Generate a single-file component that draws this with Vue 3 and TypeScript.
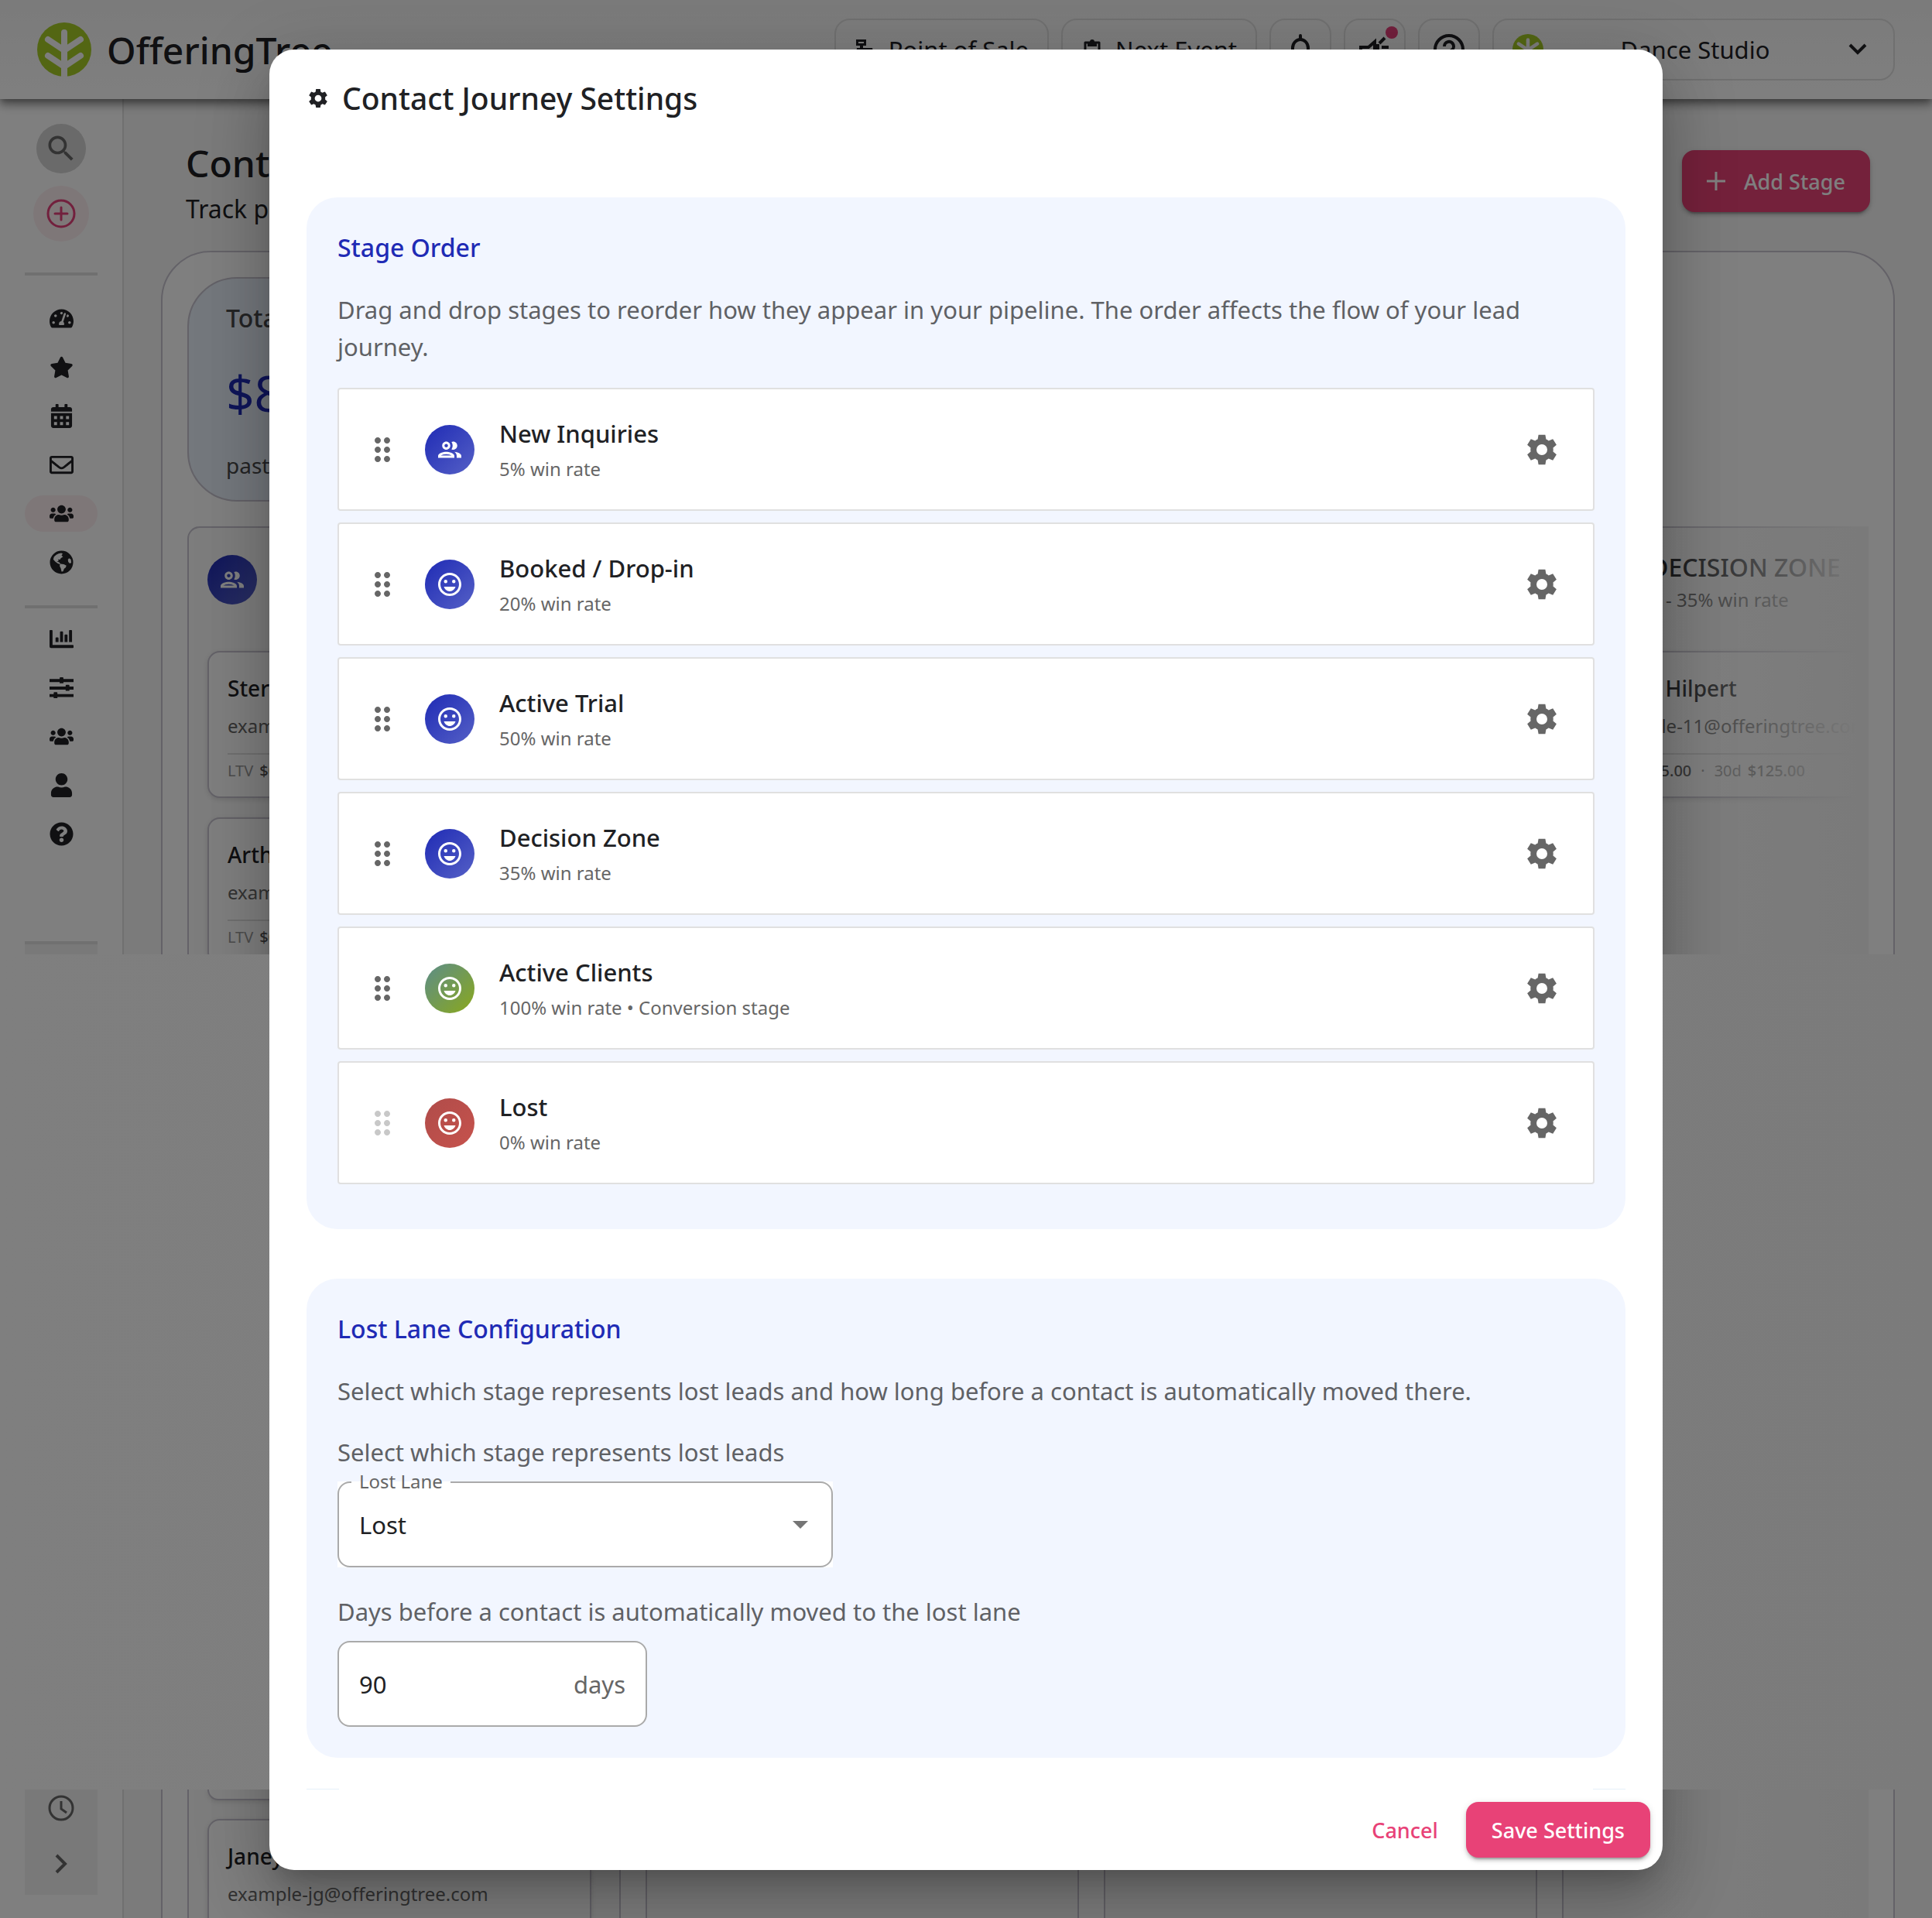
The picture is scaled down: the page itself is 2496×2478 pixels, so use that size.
<script setup lang="ts">
import { ref } from 'vue'

interface Stage {
  name: string
  detail: string
  tone: 'blue' | 'green' | 'red'
  icon: 'group' | 'smile'
  locked?: boolean
}

interface Glyph {
  box: string
  d: string
}

const stages: Stage[] = [
  { name: 'New Inquiries', detail: '5% win rate', tone: 'blue', icon: 'group' },
  { name: 'Booked / Drop-in', detail: '20% win rate', tone: 'blue', icon: 'smile' },
  { name: 'Active Trial', detail: '50% win rate', tone: 'blue', icon: 'smile' },
  { name: 'Decision Zone', detail: '35% win rate', tone: 'blue', icon: 'smile' },
  { name: 'Active Clients', detail: '100% win rate • Conversion stage', tone: 'green', icon: 'smile' },
  { name: 'Lost', detail: '0% win rate', tone: 'red', icon: 'smile', locked: true },
]

const lostLane = ref('Lost')
const lostDays = ref('90')

const material = {
  group:
    'M9 13.75c-2.34 0-7 1.17-7 3.5V19h14v-1.75c0-2.33-4.66-3.5-7-3.5zM4.34 17c.84-.58 2.87-1.25 4.66-1.25s3.82.67 4.66 1.25H4.34zM9 12c1.93 0 3.5-1.57 3.5-3.5S10.93 5 9 5 5.5 6.57 5.5 8.5 7.07 12 9 12zm0-5c.83 0 1.5.67 1.5 1.5S9.83 10 9 10s-1.5-.67-1.5-1.5S8.17 7 9 7zm7.04 6.81c1.16.84 1.96 1.96 1.96 3.44V19h4v-1.75c0-2.02-3.5-3.17-5.96-3.44zM15 12c1.93 0 3.5-1.57 3.5-3.5S16.93 5 15 5c-.54 0-1.04.13-1.5.35.63.89 1 1.98 1 3.15s-.37 2.26-1 3.15c.46.22.96.35 1.5.35z',
  smile:
    'M11.99 2C6.47 2 2 6.48 2 12s4.47 10 9.99 10C17.52 22 22 17.52 22 12S17.52 2 11.99 2zM12 20c-4.42 0-8-3.58-8-8s3.58-8 8-8 8 3.58 8 8-3.58 8-8 8zM14 9.5a1.5 1.5 0 1 0 3 0a1.5 1.5 0 1 0-3 0zM7 9.5a1.5 1.5 0 1 0 3 0a1.5 1.5 0 1 0-3 0zM12 18c2.28 0 4.22-1.66 5-4H7c.78 2.34 2.72 4 5 4z',
  gear: 'M14.2 2.4H9.8l-.5 2.9c-.6.25-1.15.57-1.65.95L4.9 5.15 2.55 8.9l2.2 1.85a7.6 7.6 0 0 0 0 2.5l-2.2 1.85 2.35 3.75 2.75-1.1c.5.38 1.05.7 1.65.95l.5 2.9h4.4l.5-2.9c.6-.25 1.15-.57 1.65-.95l2.75 1.1 2.35-3.75-2.2-1.85a7.6 7.6 0 0 0 0-2.5l2.2-1.85-2.35-3.75-2.75 1.1c-.5-.38-1.05-.7-1.65-.95zM12 8.5a3.5 3.5 0 1 1 0 7a3.5 3.5 0 0 1 0-7z',
  drag: 'M11 18c0 1.1-.9 2-2 2s-2-.9-2-2 .9-2 2-2 2 .9 2 2zm-2-8c-1.1 0-2 .9-2 2s.9 2 2 2 2-.9 2-2-.9-2-2-2zm0-6c-1.1 0-2 .9-2 2s.9 2 2 2 2-.9 2-2-.9-2-2-2zm6 4c1.1 0 2-.9 2-2s-.9-2-2-2-2 .9-2 2 .9 2 2 2zm0 2c-1.1 0-2 .9-2 2s.9 2 2 2 2-.9 2-2-.9-2-2-2zm0 6c-1.1 0-2 .9-2 2s.9 2 2 2 2-.9 2-2-.9-2-2-2z',
  search:
    'M15.5 14h-.79l-.28-.27C15.41 12.59 16 11.11 16 9.5 16 5.91 13.09 3 9.5 3S3 5.91 3 9.5 5.91 16 9.5 16c1.61 0 3.09-.59 4.23-1.57l.27.28v.79l5 4.99L20.49 19l-4.99-5zm-6 0C7.01 14 5 11.99 5 9.5S7.01 5 9.5 5 14 7.01 14 9.5 11.99 14 9.5 14z',
}

const users: Glyph = {
  box: '0 0 640 512',
  d: 'M96 224c35.3 0 64-28.7 64-64s-28.7-64-64-64-64 28.7-64 64 28.7 64 64 64zm448 0c35.3 0 64-28.7 64-64s-28.7-64-64-64-64 28.7-64 64 28.7 64 64 64zm32 32h-64c-17.6 0-33.5 7.1-45.1 18.6 40.3 22.1 68.9 62 75.1 109.4h66c17.7 0 32-14.3 32-32v-32c0-35.3-28.7-64-64-64zm-256 0c61.9 0 112-50.1 112-112S381.9 32 320 32 208 82.1 208 144s50.1 112 112 112zm76.8 32h-8.3c-20.8 10-43.9 16-68.5 16s-47.6-6-68.5-16h-8.3C179.6 288 128 339.6 128 403.2V432c0 26.5 21.5 48 48 48h288c26.5 0 48-21.5 48-48v-28.8c0-63.6-51.6-115.2-115.2-115.2zm-223.7-13.4C161.5 263.1 145.6 256 128 256H64c-35.3 0-64 28.7-64 64v32c0 17.7 14.3 32 32 32h65.9c6.3-47.4 34.9-87.3 75.2-109.4z',
}

const primaryNav: (Glyph & { label: string; active?: boolean })[] = [
  {
    label: 'Dashboard',
    box: '0 0 576 512',
    d: 'M288 32C128.94 32 0 160.94 0 320c0 52.8 14.25 102.26 39.06 144.8 5.61 9.62 16.3 15.2 27.44 15.2h443c11.14 0 21.83-5.58 27.44-15.2C561.75 422.26 576 372.8 576 320c0-159.06-128.94-288-288-288zm0 64c14.71 0 26.58 10.13 30.32 23.65-1.11 2.26-2.64 4.23-3.45 6.67l-9.22 27.67c-5.13 3.49-10.97 6.01-17.64 6.01-17.67 0-32-14.33-32-32S270.33 96 288 96zM96 384c-17.67 0-32-14.33-32-32s14.33-32 32-32 32 14.33 32 32-14.33 32-32 32zm48-160c-17.67 0-32-14.33-32-32s14.33-32 32-32 32 14.33 32 32-14.33 32-32 32zm246.77-72.41l-61.33 184C343.13 347.33 352 364.54 352 384c0 11.72-3.38 22.55-8.88 32H232.88c-5.5-9.45-8.88-20.28-8.88-32 0-33.94 26.5-61.43 59.9-63.59l61.34-184.01c4.17-12.56 17.73-19.45 30.36-15.17 12.57 4.19 19.35 17.79 15.17 30.36zm14.66 57.2l15.52-46.55c3.47-1.29 7.13-2.23 11.05-2.23 17.67 0 32 14.33 32 32s-14.33 32-32 32c-11.38-.01-20.89-6.28-26.57-15.22zM480 384c-17.67 0-32-14.33-32-32s14.33-32 32-32 32 14.33 32 32-14.33 32-32 32z',
  },
  {
    label: 'Favorites',
    box: '0 0 576 576',
    d: 'M316.9 50C311.6 39 300.4 32 288.1 32s-23.4 7-28.8 18L195 182.3 51.4 203.5c-12 1.8-22 10.2-25.7 21.7s-.7 24.2 7.9 32.7L137.8 361 113.2 506.7c-2 12 3 24.2 12.9 31.3s23 8 33.8 2.3l128.3-68.5 128.3 68.5c10.8 5.7 23.9 4.9 33.8-2.3s14.9-19.3 12.9-31.3L438.5 361 542.7 257.9c8.6-8.5 11.7-21.2 7.9-32.7s-13.7-19.9-25.7-21.7L381.2 182.3 316.9 50z',
  },
  {
    label: 'Calendar',
    box: '0 0 448 512',
    d: 'M0 464c0 26.5 21.5 48 48 48h352c26.5 0 48-21.5 48-48V192H0v272zM64 256h64v64H64zM192 256h64v64h-64zM320 256h64v64h-64zM64 384h64v64H64zM192 384h64v64h-64zM320 384h64v64h-64zM400 64h-48V16c0-8.8-7.2-16-16-16h-32c-8.8 0-16 7.2-16 16v48H160V16c0-8.8-7.2-16-16-16h-32c-8.8 0-16 7.2-16 16v48H48C21.5 64 0 85.5 0 112v48h448v-48c0-26.5-21.5-48-48-48z',
  },
  {
    label: 'Messages',
    box: '0 0 512 512',
    d: 'M464 64H48C21.49 64 0 85.49 0 112v288c0 26.51 21.49 48 48 48h416c26.51 0 48-21.49 48-48V112c0-26.51-21.49-48-48-48zm0 48v40.805c-22.422 18.259-58.168 46.651-134.587 106.49-16.841 13.247-50.201 45.072-73.413 44.701-23.208.375-56.579-31.459-73.413-44.701C106.18 199.465 70.425 171.067 48 152.805V112h416zM48 400V214.398c22.914 18.251 55.409 43.862 104.938 82.646 21.857 17.205 60.134 55.186 103.062 54.955 42.717.231 80.509-37.199 103.053-54.947 49.528-38.783 82.032-64.401 104.947-82.653V400H48z',
  },
  { label: 'Contacts', active: true, ...users },
  {
    label: 'Website',
    box: '0 0 32 32',
    d: 'M16 .5a15.5 15.5 0 1 0 0 31a15.5 15.5 0 0 0 0-31zM12 4.5L15.5 3.5 17.5 4.5 16 7 18 8.5 15 10.5 14 12.5 11.5 12 12 14.5 9.5 15 13 16 14.5 18 19 18.5 22.5 20.5 21.5 23 19.5 24.5 18 28 16 28.5 15 24 13.5 21 14 18.5 11 17.5 7.5 15 5 12 6 8.5 9 6zM26 10.5L28.5 12 29 16.5 27 17.5 25 15.5 24.5 12.5z',
  },
]

const secondaryNav: (Glyph & { label: string })[] = [
  {
    label: 'Reports',
    box: '0 0 32 32',
    d: 'M1 4h2a1 1 0 0 1 1 1v19h27a1 1 0 0 1 1 1v2a1 1 0 0 1-1 1H2a2 2 0 0 1-2-2V5a1 1 0 0 1 1-1zM9 14h2a1 1 0 0 1 1 1v5H8v-5a1 1 0 0 1 1-1zM15 6h2a1 1 0 0 1 1 1v13h-4V7a1 1 0 0 1 1-1zM21 10h2a1 1 0 0 1 1 1v9h-4v-9a1 1 0 0 1 1-1zM27 4h2a1 1 0 0 1 1 1v15h-4V5a1 1 0 0 1 1-1z',
  },
  {
    label: 'Filters',
    box: '0 0 32 32',
    d: 'M0 4.5h13.5V3a1 1 0 0 1 1-1h3a1 1 0 0 1 1 1v1.5H32v4H18.5V10h-5V8.500H0zM0 14.500h21.500V13a1 1 0 0 1 1-1h3a1 1 0 0 1 1 1v1.500H32v4h-5.500V20h-5v-1.500H0zM0 24.500h5.500V23a1 1 0 0 1 1-1h3a1 1 0 0 1 1 1v1.500H32v4H10.500V30h-5v-1.500H0z',
  },
  { label: 'Team', ...users },
  {
    label: 'Profile',
    box: '0 0 448 512',
    d: 'M224 256c70.7 0 128-57.3 128-128S294.7 0 224 0 96 57.3 96 128s57.3 128 128 128zm89.6 32h-16.7c-22.2 10.2-46.9 16-72.9 16s-50.6-5.8-72.9-16h-16.7C60.2 288 0 348.2 0 422.4V464c0 26.5 21.5 48 48 48h352c26.5 0 48-21.5 48-48v-41.6c0-74.2-60.2-134.4-134.4-134.4z',
  },
  {
    label: 'Help',
    box: '0 0 512 512',
    d: 'M504 256c0 136.997-111.043 248-248 248S8 392.997 8 256C8 119.083 119.043 8 256 8s248 111.083 248 248zM262.655 90c-54.497 0-89.255 22.957-116.549 63.758-3.536 5.286-2.353 12.415 2.715 16.258l34.699 26.31c5.205 3.947 12.621 3.008 16.665-2.122 17.864-22.658 30.113-35.797 57.303-35.797 20.429 0 45.698 13.148 45.698 32.958 0 14.976-12.363 22.667-32.534 33.976C247.128 238.528 216 254.941 216 296v4c0 6.627 5.373 12 12 12h56c6.627 0 12-5.373 12-12v-1.333c0-28.462 83.186-29.647 83.186-106.667 0-58.002-60.165-102-116.531-102zM256 338c-25.365 0-46 20.635-46 46 0 25.364 20.635 46 46 46s46-20.636 46-46c0-25.365-20.635-46-46-46z',
  },
]

interface Contact {
  name: string
  email: string
  ltv: string
  recent: string
}

interface Lane {
  title: string
  summary: string
  icon: 'group' | 'smile'
  contacts: Contact[]
}

const lanes: Lane[] = [
  {
    title: 'NEW INQUIRIES',
    summary: '3 - 5% win rate',
    icon: 'group',
    contacts: [
      { name: 'Sterling Rau', email: 'example-1@offeringtree.com', ltv: '$0.00', recent: '$0.00' },
      { name: 'Arthur Kuhn', email: 'example-2@offeringtree.com', ltv: '$0.00', recent: '$0.00' },
    ],
  },
  { title: 'BOOKED / DROP-IN', summary: '0 - 20% win rate', icon: 'smile', contacts: [] },
  { title: 'ACTIVE TRIAL', summary: '0 - 50% win rate', icon: 'smile', contacts: [] },
  {
    title: 'DECISION ZONE',
    summary: '1 - 35% win rate',
    icon: 'smile',
    contacts: [
      { name: 'Jamie Hilpert', email: 'example-11@offeringtree.com', ltv: '$125.00', recent: '$125.00' },
    ],
  },
]
</script>

<template>
  <div class="app">
    <div class="page">
      <div class="page-top">
        <header class="topbar">
          <a href="#" class="brand">
            <svg class="leaf" viewBox="0 0 70 70" aria-hidden="true">
              <circle cx="35" cy="35" r="35" fill="#a6cc27" />
              <path d="M35 13v57M35 36L14 22M35 36L56 22M35 57L14 43M35 57L56 43" stroke="#fafafa" stroke-width="8" stroke-linecap="round" fill="none" />
            </svg>
            <span>OfferingTree</span>
          </a>
          <nav class="tools">
            <button type="button" class="tool wide">
              <svg width="28" height="28" viewBox="0 0 28 28" aria-hidden="true">
                <path d="M2 1h13v8h-4v3h12l3 15H1l2-15h4V9H2zM5 4v2h7V4z" fill="#202124" fill-rule="evenodd" />
                <path d="M8 15v3M13 15v3M18 15v3" stroke="#fff" stroke-width="2" />
              </svg>
              Point of Sale
            </button>
            <button type="button" class="tool wide">
              <svg width="28" height="28" viewBox="0 0 28 28" aria-hidden="true">
                <path d="M5 5h18v21H5z" fill="none" stroke="#202124" stroke-width="3" stroke-linejoin="round" />
                <path d="M8 4h3a3 3 0 0 1 6 0h3v6H8z" fill="#202124" />
              </svg>
              Next Event
            </button>
            <button type="button" class="tool" aria-label="Notifications">
              <svg width="40" height="40" viewBox="0 0 40 40" aria-hidden="true">
                <path d="M20 2v5M10 29V18a10 11 0 0 1 20 0v11l3 3H7z" fill="none" stroke="#202124" stroke-width="4" stroke-linecap="round" />
              </svg>
            </button>
            <button type="button" class="tool" aria-label="Announcements">
              <svg width="44" height="40" viewBox="0 0 44 40" aria-hidden="true">
                <path d="M4 17h10l8-7v20l-8-6H4zM28 12l7-7M31 17h9M26 13v11" fill="none" stroke="#202124" stroke-width="4" />
              </svg>
              <span class="dot"></span>
            </button>
            <button type="button" class="tool" aria-label="Help">
              <svg width="40" height="40" viewBox="0 0 40 40" aria-hidden="true">
                <circle cx="20" cy="20" r="18" fill="none" stroke="#202124" stroke-width="4" />
                <path d="M14 16a6 6 0 1 1 9 5c-2 1-3 2-3 4M20 28v3" fill="none" stroke="#202124" stroke-width="4" />
              </svg>
            </button>
            <button type="button" class="tool account">
              <svg width="40" height="40" viewBox="0 0 70 70" aria-hidden="true">
                <circle cx="35" cy="35" r="35" fill="#a6cc27" />
                <path d="M35 13v57M35 36L14 22M35 36L56 22M35 57L14 43M35 57L56 43" stroke="#fafafa" stroke-width="8" stroke-linecap="round" fill="none" />
              </svg>
              <span>Dance Studio</span>
              <svg width="28" height="20" viewBox="0 0 28 20" aria-hidden="true">
                <path d="M4 4l10 10L24 4" fill="none" stroke="#202124" stroke-width="4" />
              </svg>
            </button>
          </nav>
        </header>

        <div class="shell">
          <aside class="sidebar">
            <button type="button" class="round search" aria-label="Search">
              <svg width="44" height="44" viewBox="0 0 24 24" aria-hidden="true"><path :d="material.search" fill="#666" /></svg>
            </button>
            <button type="button" class="round create" aria-label="Create">
              <svg width="38" height="38" viewBox="0 0 38 38" aria-hidden="true">
                <path d="M19 11v16M11 19h16" stroke="#e4407a" stroke-width="3" stroke-linecap="round" />
                <circle cx="19" cy="19" r="17" fill="none" stroke="#e4407a" stroke-width="3" />
              </svg>
            </button>
            <hr />
            <nav class="links">
              <a v-for="item in primaryNav" :key="item.label" href="#" :class="{ active: item.active }" :aria-label="item.label">
                <svg :viewBox="item.box" width="31" height="31" aria-hidden="true"><path :d="item.d" fill-rule="evenodd" /></svg>
              </a>
            </nav>
            <hr />
            <nav class="links second">
              <a v-for="item in secondaryNav" :key="item.label" href="#" :aria-label="item.label">
                <svg :viewBox="item.box" width="31" height="31" aria-hidden="true"><path :d="item.d" fill-rule="evenodd" /></svg>
              </a>
            </nav>
            <div class="rail-foot"></div>
          </aside>

          <main class="main">
            <div class="heading">
              <div>
                <h1>Contact Journey</h1>
                <p>Track potential clients</p>
              </div>
              <button type="button" class="primary add">
                <svg width="24" height="24" viewBox="0 0 24 24" aria-hidden="true"><path d="M12 0v24M0 12h24" stroke="#fff" stroke-width="3" /></svg>
                Add Stage
              </button>
            </div>
            <section class="board">
              <div class="kpi">
                <span class="kpi-title">Total Value</span>
                <strong>$8,250</strong>
                <span class="kpi-note">past 30 days</span>
              </div>
              <div class="lanes">
                <div v-for="lane in lanes" :key="lane.title" class="lane">
                  <div class="lane-head">
                    <span class="badge blue">
                      <svg width="36" height="36" viewBox="0 0 24 24" aria-hidden="true"><path :d="material[lane.icon]" fill="#fff" /></svg>
                    </span>
                    <div>
                      <h2>{{ lane.title }}</h2>
                      <p>{{ lane.summary }}</p>
                    </div>
                  </div>
                  <article v-for="c in lane.contacts" :key="c.email" class="contact">
                    <h3>{{ c.name }}</h3>
                    <p>{{ c.email }}</p>
                    <footer><span>LTV</span><b>{{ c.ltv }}</b><i>·</i><span>30d</span><b class="soft">{{ c.recent }}</b></footer>
                  </article>
                </div>
              </div>
            </section>
          </main>
        </div>
      </div>

      <div class="page-gap"></div>

      <div class="page-bottom">
        <aside class="sidebar low">
          <div class="rail-end">
            <svg width="36" height="36" viewBox="0 0 36 36" aria-hidden="true">
              <circle cx="18" cy="18" r="15" fill="none" stroke="#666" stroke-width="3" />
              <path d="M18 9v10l7 5" fill="none" stroke="#666" stroke-width="3" />
            </svg>
            <svg width="20" height="28" viewBox="0 0 20 28" aria-hidden="true"><path d="M4 3l11 11L4 25" fill="none" stroke="#666" stroke-width="4" /></svg>
          </div>
        </aside>
        <div class="main low">
          <div class="board low">
            <div class="lanes">
              <div class="lane">
                <div class="contact tail"></div>
                <article class="contact">
                  <h3>Janey Grant</h3>
                  <p>example-jg@offeringtree.com</p>
                </article>
              </div>
              <div class="lane"></div>
              <div class="lane"></div>
              <div class="lane"></div>
            </div>
          </div>
        </div>
      </div>
    </div>

    <div class="scrim"><div class="halo"></div></div>
    <div class="veil"></div>

    <form class="dialog" role="dialog" aria-labelledby="dialog-title" @submit.prevent>
      <header class="dialog-head">
        <svg width="30" height="30" viewBox="0 0 24 24" aria-hidden="true"><path :d="material.gear" fill="#202124" fill-rule="evenodd" /></svg>
        <h2 id="dialog-title">Contact Journey Settings</h2>
      </header>

      <div class="dialog-body">
        <section class="panel order">
          <h3>Stage Order</h3>
          <p>Drag and drop stages to reorder how they appear in your pipeline. The order affects the flow of your lead journey.</p>
          <ul>
            <li v-for="stage in stages" :key="stage.name">
              <svg class="drag" :class="{ locked: stage.locked }" width="48" height="48" viewBox="0 0 24 24" aria-hidden="true"><path :d="material.drag" /></svg>
              <span class="badge" :class="stage.tone">
                <svg width="36" height="36" viewBox="0 0 24 24" aria-hidden="true"><path :d="material[stage.icon]" fill="#fff" /></svg>
              </span>
              <div class="stage-text">
                <h4>{{ stage.name }}</h4>
                <span>{{ stage.detail }}</span>
              </div>
              <button type="button" class="cog" :aria-label="`Configure ${stage.name}`">
                <svg width="48" height="48" viewBox="0 0 24 24" aria-hidden="true"><path :d="material.gear" fill="#666" fill-rule="evenodd" /></svg>
              </button>
            </li>
          </ul>
        </section>

        <section class="panel">
          <h3>Lost Lane Configuration</h3>
          <p>Select which stage represents lost leads and how long before a contact is automatically moved there.</p>
          <p>Select which stage represents lost leads</p>
          <div class="select-box">
            <label for="lost-lane">Lost Lane</label>
            <select id="lost-lane" v-model="lostLane">
              <option v-for="stage in stages" :key="stage.name">{{ stage.name }}</option>
            </select>
            <svg width="48" height="48" viewBox="0 0 24 24" aria-hidden="true"><path d="M7 10l5 5 5-5z" fill="#757575" /></svg>
          </div>
          <label class="days-label" for="lost-days">Days before a contact is automatically moved to the lost lane</label>
          <div class="days-box">
            <input id="lost-days" v-model="lostDays" type="text" inputmode="numeric" />
            <span>days</span>
          </div>
        </section>
        <div class="next-edge"><span></span><span></span></div>
      </div>

      <footer class="dialog-foot">
        <button type="button" class="cancel">Cancel</button>
        <button type="submit" class="primary save">Save Settings</button>
      </footer>
    </form>
  </div>
</template>

<style>
body {
  margin: 0;
}
</style>

<style scoped>
.app,
.app * {
  box-sizing: border-box;
}
.app {
  position: relative;
  overflow: hidden;
  padding: 64px 0;
  font-family: 'Noto Sans', 'Open Sans', sans-serif;
  font-size: 31px;
  color: #202124;
}
h1,
h2,
h3,
h4,
p,
ul {
  margin: 0;
  padding: 0;
  font-size: inherit;
  font-weight: 400;
}
button,
input,
select {
  font: inherit;
  color: inherit;
  border: 0;
  background: none;
  padding: 0;
}
svg {
  display: block;
  flex: none;
}
a {
  color: inherit;
  text-decoration: none;
}

/* page behind the dialog */
.page,
.scrim,
.veil {
  position: absolute;
  inset: 0;
}
.page {
  isolation: isolate;
  display: flex;
  flex-direction: column;
  background: #f7f7f7;
}
.page-top {
  height: 1233px;
  overflow: hidden;
  display: flex;
  flex-direction: column;
}
.page-gap {
  flex: 1;
}
.page-bottom {
  height: 168px;
  overflow: hidden;
  display: flex;
}
.scrim {
  background: rgba(0, 0, 0, 0.5);
}
.halo {
  width: 1800px;
  max-width: calc(100% - 128px);
  height: calc(100% - 128px);
  margin: 64px auto;
  border-radius: 32px;
  box-shadow: 0 22px 30px -14px rgba(0, 0, 0, 0.2), 0 48px 76px 6px rgba(0, 0, 0, 0.14), 0 18px 92px 16px rgba(0, 0, 0, 0.12);
}
.veil {
  top: 1233px;
  bottom: 168px;
  background: linear-gradient(90deg, #7f7f7f, #7b7b7b);
}

.topbar {
  position: relative;
  z-index: 1;
  flex: none;
  height: 128px;
  padding: 0 48px;
  display: flex;
  align-items: center;
  justify-content: space-between;
  background: linear-gradient(#f6f6f6, #ffffff);
  box-shadow: 0 4px 8px -2px rgba(0, 0, 0, 0.3), 0 8px 10px rgba(0, 0, 0, 0.24), 0 2px 20px rgba(0, 0, 0, 0.22);
}
.brand {
  display: flex;
  align-items: center;
  gap: 20px;
  font-size: 48px;
  font-weight: 500;
}
.leaf {
  width: 70px;
  height: 70px;
}
.tools {
  display: flex;
  gap: 16px;
}
.tool {
  position: relative;
  width: 80px;
  height: 80px;
  border: 2px solid #e0e0e0;
  border-radius: 20px;
  display: flex;
  align-items: center;
  justify-content: center;
}
.tool.wide {
  width: auto;
  padding: 0 24px;
  gap: 16px;
}
.tool.account {
  width: 520px;
  padding: 0 32px 0 24px;
  justify-content: space-between;
}
.dot {
  position: absolute;
  top: 8px;
  right: 8px;
  width: 16px;
  height: 16px;
  border-radius: 50%;
  background: #e4407a;
}

.shell {
  flex: 1;
  display: flex;
}
.sidebar {
  flex: none;
  width: 160px;
  padding: 32px 0 0;
  border-right: 2px solid #e0e0e0;
  background: #ffffff;
  display: flex;
  flex-direction: column;
  align-items: center;
}
.sidebar hr {
  flex: none;
  width: 94px;
  height: 4px;
  border: 0;
  margin: 0;
  background: #e0e0e0;
}
.round {
  flex: none;
  border-radius: 50%;
  display: flex;
  align-items: center;
  justify-content: center;
}
.search {
  width: 64px;
  height: 64px;
  background: #d4d4d4;
}
.create {
  width: 72px;
  height: 72px;
  margin: 16px 0 40px;
  background: #fdeef1;
}
.links {
  display: flex;
  flex-direction: column;
  gap: 16px;
  padding: 32px 0;
}
.links.second {
  padding: 16px 0 115px;
}
.links a {
  width: 94px;
  height: 47px;
  border-radius: 24px;
  display: flex;
  align-items: center;
  justify-content: center;
}
.links a.active {
  background: #fdeef1;
}
.links svg {
  fill: #202124;
}
.rail-foot {
  width: 94px;
  flex: 1;
  border-top: 4px solid #e0e0e0;
  background: #f2f2f2;
}
.main {
  flex: 1;
  min-width: 0;
  padding: 48px 48px 0;
}
.heading {
  display: flex;
  align-items: flex-start;
  justify-content: space-between;
  padding: 0 32px;
  height: 148px;
}
.heading h1 {
  font-size: 48px;
  line-height: 70px;
  font-weight: 500;
}
.heading p {
  font-size: 32px;
  line-height: 48px;
}
.primary {
  display: flex;
  align-items: center;
  justify-content: center;
  border-radius: 16px;
  background: #e84277;
  color: #ffffff;
  font-size: 27px;
  font-weight: 500;
  box-shadow: 0 6px 2px -4px rgba(0, 0, 0, 0.2), 0 4px 4px rgba(0, 0, 0, 0.14), 0 2px 10px rgba(0, 0, 0, 0.12);
}
.add {
  height: 80px;
  margin-top: 18px;
  padding: 0 32px;
  gap: 24px;
}
.board {
  border: 2px solid #c8c5d0;
  border-radius: 64px;
  padding: 32px;
  height: 2200px;
  background: #ffffff;
}
.kpi {
  width: 560px;
  height: 290px;
  border: 2px solid #c8c5d0;
  border-radius: 64px;
  padding: 23px 48px;
  display: flex;
  flex-direction: column;
  background: #e8f1fb;
  color: #49494b;
}
.kpi-title {
  font-size: 32px;
  line-height: 56px;
  font-weight: 500;
}
.kpi strong {
  font-size: 64px;
  line-height: 138px;
  font-weight: 400;
  color: #1f2bb5;
}
.kpi-note {
  font-size: 28px;
  line-height: 48px;
}
.lanes {
  position: relative;
  margin-top: 32px;
  display: flex;
  gap: 32px;
  overflow: hidden;
}
.lanes::after {
  content: '';
  position: absolute;
  top: 0;
  right: 0;
  bottom: 0;
  width: 280px;
  background: linear-gradient(90deg, rgba(245, 245, 245, 0), #f5f5f5 95%);
}
.lane {
  flex: none;
  width: 560px;
  height: 1600px;
  border: 2px solid #c8c5d0;
  border-radius: 16px;
  padding: 0 24px;
  background: #fafafa;
}
.lane-head {
  height: 159px;
  padding-top: 27px;
  display: flex;
  gap: 24px;
}
.lane-head h2 {
  font-size: 32px;
  line-height: 48px;
  font-weight: 500;
}
.lane-head .badge {
  margin-top: 8px;
}
.lane-head p {
  font-size: 24px;
  line-height: 36px;
  color: #666;
}
.contact {
  width: 496px;
  height: 190px;
  margin-bottom: 25px;
  border: 2px solid #c8c5d0;
  border-radius: 16px;
  padding: 24px 24px 0;
  background: #ffffff;
  box-shadow: 0 2px 6px rgba(0, 0, 0, 0.12);
}
.contact h3 {
  font-size: 28px;
  line-height: 44px;
  font-weight: 500;
}
.contact p {
  margin-top: 8px;
  font-size: 24px;
  line-height: 38px;
  color: #666;
}
.contact footer {
  display: flex;
  gap: 8px;
  margin-top: 16px;
  padding-top: 5px;
  border-top: 2px solid #e0e0e0;
  font-size: 20px;
  line-height: 32px;
  color: #999;
}
.contact b {
  font-weight: 500;
  color: #555;
}
.contact b.soft {
  color: #777;
}
.contact i {
  font-style: normal;
  padding: 0 4px;
}

/* lower slice of the same page */
.sidebar.low {
  padding: 0;
}
.rail-end {
  width: 94px;
  height: 136px;
  padding: 6px 0 26px;
  background: #f2f2f2;
  display: flex;
  flex-direction: column;
  align-items: center;
  justify-content: space-between;
}
.main.low {
  padding-top: 0;
}
.board.low {
  border-width: 0 2px;
  border-radius: 0;
  padding-top: 0;
}
.board.low .lanes {
  margin-top: 0;
}
.board.low .lane {
  border-width: 0 2px;
  border-radius: 0;
}
.contact.tail {
  height: 14px;
  padding: 0;
  margin-bottom: 24px;
  border-top: 0;
  border-radius: 0 0 16px 16px;
}

/* dialog */
.dialog {
  position: relative;
  width: 1800px;
  max-width: calc(100% - 128px);
  margin: 0 auto;
  border-radius: 32px;
  background: #ffffff;
}
.dialog-head {
  display: flex;
  align-items: center;
  gap: 16px;
  padding: 32px 48px;
}
.dialog-head h2 {
  font-size: 39px;
  line-height: 62px;
  font-weight: 500;
}
.dialog-body {
  padding: 65px 48px 0;
}
.panel {
  border-radius: 40px;
  padding: 40px;
  background: #f2f6ff;
}
.panel.order {
  margin-bottom: 64px;
  padding-bottom: 58px;
}
.panel h3 {
  font-size: 32px;
  line-height: 50px;
  font-weight: 500;
  color: #1f2bb5;
}
.panel p {
  margin-top: 31px;
  line-height: 48px;
  color: #5f6165;
}
.panel ul {
  margin-top: 29px;
  list-style: none;
  display: flex;
  flex-direction: column;
  gap: 15px;
}
.panel li {
  height: 159px;
  padding: 0 32px;
  border: 2px solid #e0e0e0;
  border-radius: 4px;
  background: #ffffff;
  display: flex;
  align-items: center;
}
.drag {
  margin-right: 31px;
  fill: #666;
}
.drag.locked {
  fill: #c8c8c8;
}
.badge {
  flex: none;
  width: 64px;
  height: 64px;
  border-radius: 50%;
  display: flex;
  align-items: center;
  justify-content: center;
}
.badge.blue {
  background: linear-gradient(135deg, #1f2bb5, #5560c6);
}
.badge.green {
  background: linear-gradient(135deg, #5c8d89, #8aa81c);
}
.badge.red {
  background: linear-gradient(135deg, #b04c4a, #c6524c);
}
.stage-text {
  flex: 1;
  margin-left: 32px;
}
.stage-text h4 {
  line-height: 50px;
  font-weight: 500;
}
.stage-text span {
  display: block;
  font-size: 24px;
  line-height: 42px;
  color: #666;
}
.cog {
  padding: 10px;
}
.days-label {
  display: block;
  line-height: 48px;
  color: #5f6165;
}
.select-box {
  position: relative;
  width: 640px;
  max-width: 100%;
  height: 111px;
  margin: 14px 0 33px;
  background: #ffffff;
}
.select-box label {
  position: absolute;
  left: 18px;
  top: -15px;
  padding: 0 10px;
  font-size: 24px;
  line-height: 30px;
  color: #666;
  background: linear-gradient(transparent 50%, #ffffff 50%);
}
.select-box select {
  width: 100%;
  height: 100%;
  padding: 0 26px;
  border: 2px solid #aaaaaa;
  border-radius: 16px;
  appearance: none;
}
.select-box svg {
  position: absolute;
  right: 18px;
  top: 31px;
  pointer-events: none;
}
.days-box {
  width: 400px;
  height: 111px;
  margin-top: 14px;
  padding: 0 26px;
  border: 2px solid #aaaaaa;
  border-radius: 16px;
  background: #ffffff;
  display: flex;
  align-items: center;
  color: #666;
}
.days-box input {
  flex: 1;
  min-width: 0;
  color: #202124;
}
.next-edge {
  margin-top: 40px;
  display: flex;
  justify-content: space-between;
}
.next-edge span {
  width: 42px;
  height: 1px;
  background: #e6f0fa;
}
.dialog-foot {
  display: flex;
  justify-content: flex-end;
  gap: 36px;
  padding: 16px;
}
.cancel {
  font-size: 27px;
  font-weight: 500;
  color: #e84277;
}
.save {
  height: 72px;
  padding: 0 33px;
}
</style>
